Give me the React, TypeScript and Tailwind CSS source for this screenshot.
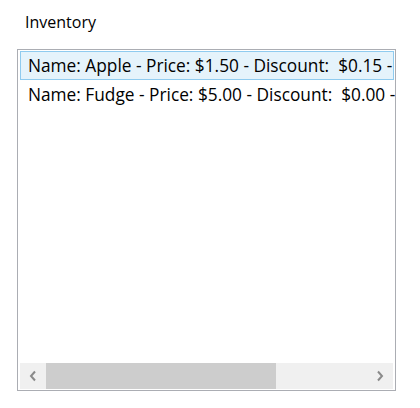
import React from "react";

const items = [
  "Name: Apple - Price: $1.50 - Discount:  $0.15 -",
  "Name: Fudge - Price: $5.00 - Discount:  $0.00 -",
];

function Chevron({ dir }: { dir: "left" | "right" }) {
  return (
    <svg width="8" height="12" viewBox="0 0 8 12">
      <path
        d={dir === "left" ? "M6 1.5 L2 6 L6 10.5" : "M2 1.5 L6 6 L2 10.5"}
        fill="none"
        stroke="#8a8a8a"
        strokeWidth="2"
      />
    </svg>
  );
}

export default function App() {
  return (
    <div className="h-[408px] w-[420px] bg-white font-['Open_Sans',sans-serif] text-black">
      <div className="pl-[25px] pt-[10px] text-[16px] leading-[24px]">Inventory</div>

      <div className="ml-[17px] mt-[15px] flex h-[342px] w-[379px] flex-col border border-[#abadb3]">
        <div className="flex-1 overflow-hidden pl-[2px] pr-[1px] pt-[1px]">
          {items.map((item, i) => (
            <div
              key={item}
              className={`h-[29px] whitespace-pre border pl-[7px] text-[17.3px] leading-[27px] ${
                i === 0
                  ? "border-[#8fcbef] bg-[#e5f3fb]"
                  : "border-transparent"
              }`}
            >
              {item}
            </div>
          ))}
        </div>

        <div className="mx-[2px] mb-[1px] flex h-[26px] bg-[#f0f0f0]">
          <div className="flex w-[26px] items-center justify-center">
            <Chevron dir="left" />
          </div>
          <div className="w-[230px] bg-[#cdcdcd]"></div>
          <div className="flex-1"></div>
          <div className="flex w-[26px] items-center justify-center">
            <Chevron dir="right" />
          </div>
        </div>
      </div>
    </div>
  );
}
